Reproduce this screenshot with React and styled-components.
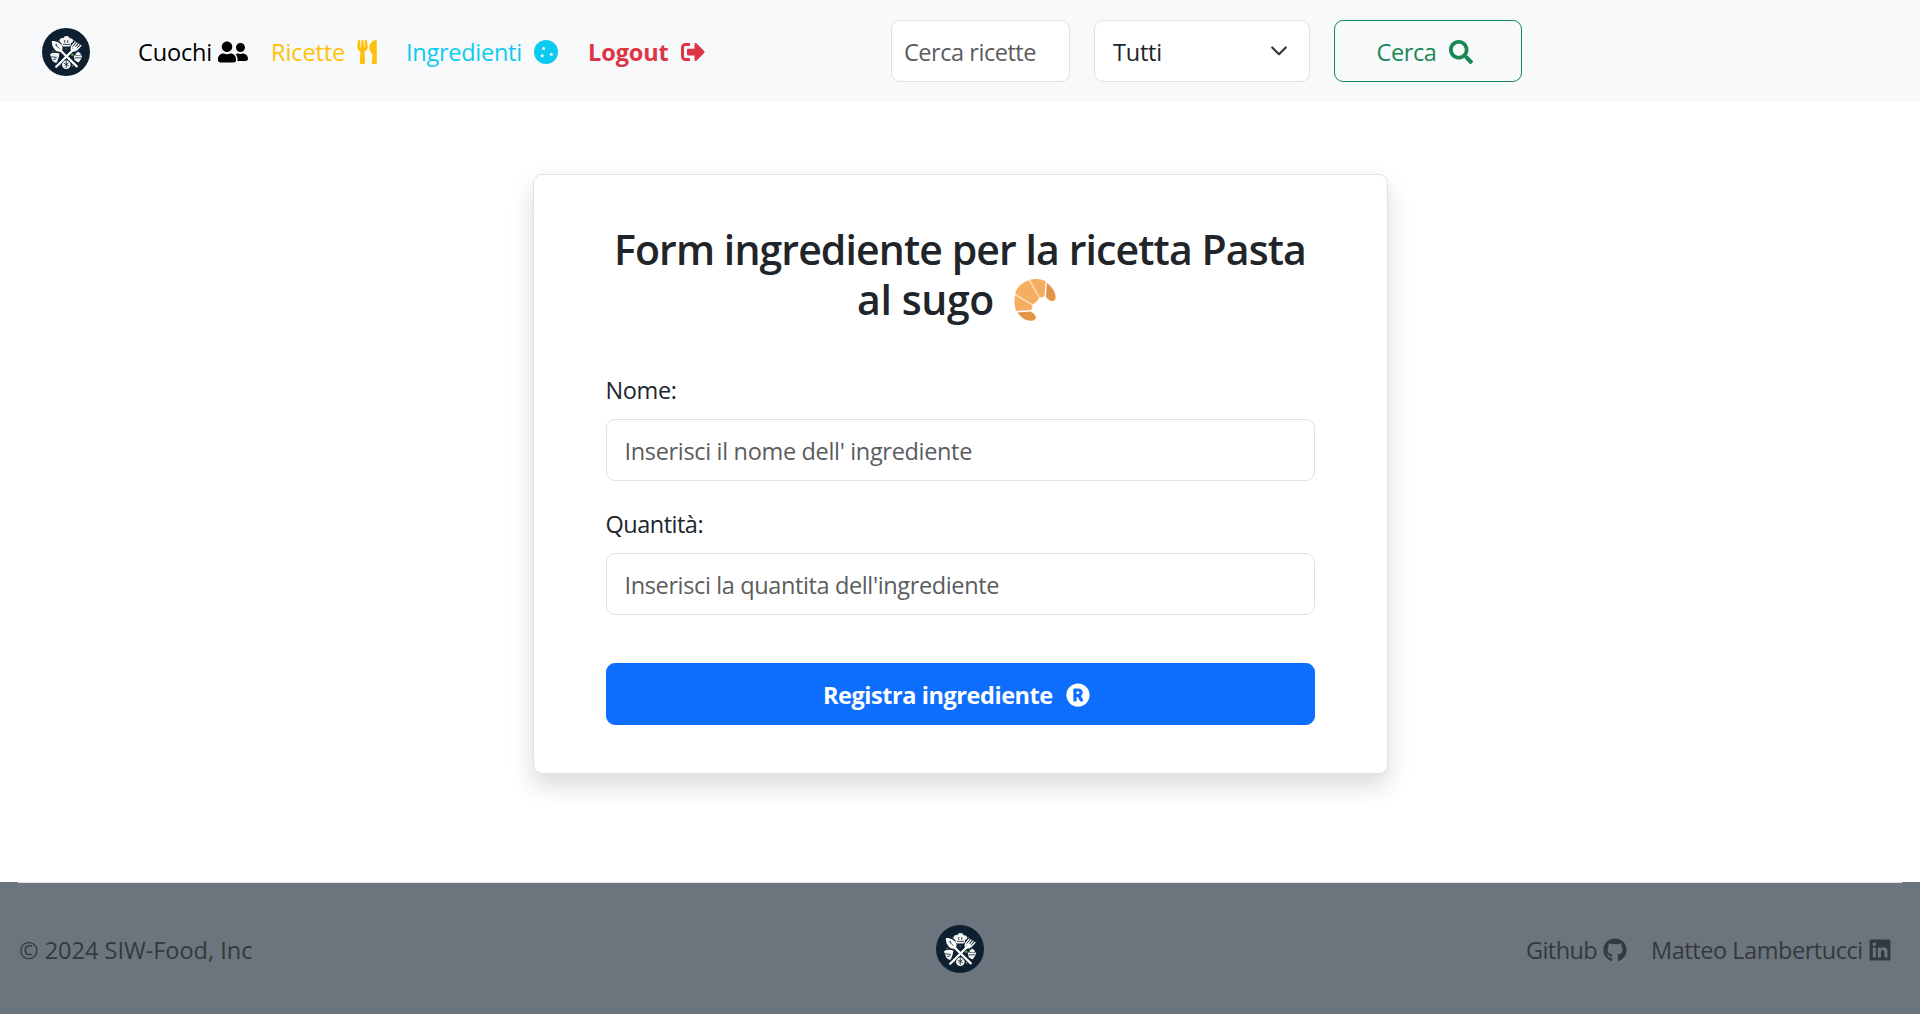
import React from "react";
import styled, { createGlobalStyle } from "styled-components";
import {
  FaUserFriends,
  FaUtensils,
  FaSignOutAlt,
  FaSearch,
  FaRegistered,
  FaGithub,
  FaLinkedin,
} from "react-icons/fa";

const GlobalStyle = createGlobalStyle`
  *, *::before, *::after { box-sizing: border-box; }
  body {
    margin: 0;
    background: #fff;
    color: #212529;
    font-family: "Open Sans", "Noto Sans", sans-serif;
    font-size: 23.5px;
    line-height: 36px;
  }
`;

const Page = styled.div`
  display: flex;
  flex-direction: column;
  height: 1014px;
  overflow: hidden;
`;

const Navbar = styled.header`
  display: flex;
  align-items: center;
  height: 102px;
  padding: 0 398px 0 42px;
  background: #f8f9fa;
`;

const Brand = styled.a`
  display: flex;
  margin-right: 48px;
  padding-top: 2px;
`;

const NavLinks = styled.nav`
  display: flex;
  align-items: center;
`;

const NavLink = styled.a`
  display: flex;
  align-items: center;
  width: ${(p) => p.$width}px;
  padding-top: 2px;
  color: ${(p) => p.$color};
  font-weight: ${(p) => (p.$bold ? 700 : 400)};
`;

const FriendsIcon = styled(FaUserFriends)`
  width: 30px;
  height: 24px;
`;

const Label = styled.span`
  flex: none;
  width: ${(p) => p.$width}px;
  letter-spacing: ${(p) => p.$tracking || 0}px;
  text-align: left;
  white-space: nowrap;
`;

const SearchForm = styled.form`
  display: flex;
  gap: 24px;
  margin-left: auto;
`;

const Field = styled.input`
  display: block;
  width: ${(p) => p.$width || "100%"};
  height: 62px;
  padding: 2px ${(p) => p.$inset}px 0;
  border: 1px solid #dee2e6;
  border-radius: 9px;
  outline: none;
  background: #fff;
  color: #212529;
  font: inherit;
  letter-spacing: ${(p) => p.$tracking}px;
  &::placeholder {
    color: #595c5f;
    opacity: 1;
  }
`;

const Select = styled.div`
  display: flex;
  align-items: center;
  justify-content: space-between;
  width: 216px;
  height: 62px;
  padding: 2px 21px 0 18px;
  border: 1px solid #dee2e6;
  border-radius: 9px;
  background: #fff;
`;

const Button = styled.button`
  display: flex;
  align-items: center;
  justify-content: center;
  width: ${(p) => p.$width};
  height: 62px;
  padding: 2px 7px 0 0;
  border: 1px solid ${(p) => p.$border};
  border-radius: 9px;
  background: ${(p) => p.$fill};
  color: ${(p) => p.$color};
  font: inherit;
  font-weight: ${(p) => (p.$bold ? 700 : 400)};
`;

const Main = styled.main`
  flex: 1;
  display: flex;
  justify-content: center;
  align-items: flex-start;
  padding-top: 72px;
`;

const Card = styled.section`
  width: 855px;
  height: 600px;
  padding: 48px 72px;
  border: 1px solid #dee2e6;
  border-radius: 9px;
  background: #fff;
  box-shadow: 0 12px 24px rgba(0, 0, 0, 0.15);
`;

const Title = styled.h2`
  margin: 0 0 48px;
  height: 101px;
  padding-top: 1px;
  font-size: 41px;
  font-weight: 550;
  line-height: 50px;
  text-align: center;
  white-space: nowrap;
`;

const TitleLine = styled.span`
  display: flex;
  align-items: center;
  justify-content: center;
  gap: 20px;
  padding-right: ${(p) => p.$trail || 0}px;
  letter-spacing: ${(p) => p.$tracking}px;
`;

const TitleIcon = styled.svg`
  width: 42px;
  height: 42px;
  margin-top: 2px;
`;

const FormGroup = styled.div`
  margin-bottom: ${(p) => p.$gap}px;
`;

const FormLabel = styled.label`
  display: block;
  margin-bottom: 11px;
  letter-spacing: ${(p) => p.$tracking}px;
`;

const Footer = styled.footer`
  height: 132px;
  padding: 0 18px;
  background: #6c757d;
  color: #34393e;
`;

const FooterBar = styled.div`
  display: grid;
  grid-template-columns: 1fr auto 1fr;
  align-items: center;
  height: 132px;
  padding-top: 1px;
  border-top: 1px solid #dee2e6;
`;

const Copyright = styled.span`
  padding: 2px 0 0 1px;
`;

const Social = styled.div`
  display: flex;
  justify-content: flex-end;
  gap: 24px;
  padding: 2px 10px 0 0;
`;

const SocialLink = styled.a`
  display: flex;
  align-items: center;
`;

function Logo() {
  return (
    <svg width="48" height="48" viewBox="0 0 48 48">
      <circle cx="24" cy="24" r="24" fill="#0e2030" />
      <g fill="#f4f6f6">
        <path d="M19.8 18 19.3 14.9C17 14 16.8 11 19.2 10.2 20.1 9.9 21 10.1 21.4 10.4 21.7 7.2 27.3 7.2 27.6 10.4 28.6 9.8 31.1 10.4 31.1 12.8 31.1 14.1 30.2 14.8 29 15L28.6 18Q24.3 19 19.8 18Z" />
        <path d="M8 26.3Q11.5 23.8 17.5 25.6L16.5 30 14.8 34.4Q12.2 35.5 10.3 32.6Z" />
        <path d="M31.7 27.6H40.2Q39.5 32 36.6 34.5L32.8 32.5Z" />
        <path d="M33.6 25.8 36.2 23.4 38.8 25.8V27H33.6Z" />
        <circle cx="24.3" cy="36.7" r="4.3" />
      </g>
      <g fill="none" stroke="#0e2030" strokeWidth=".8">
        <path d="m9.3 28.8 5.5.6M11.2 31.7l3-1M33 29.8h6M24.3 33v7M21.8 35.2l5 2.5M26.6 34.8l-4 2.7M21 16.4h7M22.8 12v3M25.8 12v3" />
      </g>
      <path d="m18.5 22.5 16.3 15.8M30 22 13.8 38.7" stroke="#0e2030" strokeWidth="4" />
      <path d="m18 22 16.8 16.3" stroke="#fff" strokeWidth="2.3" strokeLinecap="round" />
      <path d="M31.5 21.5 14.2 38.7" stroke="#fff" strokeWidth="2.3" strokeLinecap="round" />
      <path d="M9.8 13C14.7 12.7 19.4 15.4 20.6 19.5L20 23.9 15.6 23.6C11.8 22 9.8 18 9.8 13Z" fill="#fff" />
      <path d="m12.9 16.2 4.6 4.6M14.4 15.8l.5 2.5" stroke="#34434d" strokeWidth=".9" fill="none" />
      <path d="m33 14.1-3.5 4.5q-1.1 3.3 1.3 4.2 2.2.8 4.4-1.3l3.7-4M35 14.9l-3.4 4.5M37 16.2l-3.7 4.5" fill="none" stroke="#fff" strokeWidth="1.3" strokeLinecap="round" />
      <path d="m30 19.2 1 3.4 3.2-.8 1.2-1.8-3-2.3Z" fill="#fff" />
      <circle cx="30.3" cy="26.8" r="1.3" fill="#4fa63c" />
      <g fill="#aeb8bd">
        <circle cx="17" cy="13" r=".6" />
        <circle cx="11" cy="23.2" r=".6" />
        <circle cx="24.2" cy="21" r=".6" />
        <circle cx="32" cy="12.6" r=".6" />
        <circle cx="18.2" cy="36.8" r=".6" />
        <circle cx="30.4" cy="37.7" r=".6" />
      </g>
    </svg>
  );
}

function CookieIcon() {
  return (
    <svg width="24" height="24" viewBox="0 0 24 24">
      <circle cx="12" cy="12" r="12" fill="currentColor" />
      <g fill="#f8f9fa">
        <circle cx="9.6" cy="8.5" r="1.5" />
        <circle cx="17.3" cy="14.2" r="1.5" />
        <circle cx="8.2" cy="15.7" r="1.5" />
      </g>
    </svg>
  );
}

function CroissantIcon() {
  return (
    <TitleIcon viewBox="0 0 126 127">
      <path
        d="M4 46 44 4 94 5 91 53 75 58 55 80 52 94 5 97Z"
        fill="#fbe3bd"
      />
      <g fill="#f4ad61">
        <path d="M3 50 54 79Q56 86 51 94L5 96Q-2 71 3 50Z" />
        <path d="M3 44Q10 17 43 4L74 55Q75 67 56 76Z" />
        <path d="M48 2Q74-3 95 7L92 51Q85 56 77 54Z" />
      </g>
      <g fill="#e19547">
        <path d="M99 11Q128 34 125 60 121 70 108 65 101 62 96 54Z" />
        <path d="M10 101 50 98Q68 108 65 119 63 127 50 126 27 126 10 101Z" />
      </g>
    </TitleIcon>
  );
}

function Chevron() {
  return (
    <svg width="18" height="18" viewBox="0 0 16 16">
      <path
        d="m2 4 6 6 6-6"
        fill="none"
        stroke="#343a40"
        strokeWidth="2"
        strokeLinecap="round"
        strokeLinejoin="round"
      />
    </svg>
  );
}

export default function App() {
  return (
    <Page>
      <GlobalStyle />
      <Navbar>
        <Brand>
          <Logo />
        </Brand>
        <NavLinks>
          <NavLink $color="#000" $width={133}>
            <Label $width={80} $tracking={-0.15}>Cuochi</Label>
            <FriendsIcon />
          </NavLink>
          <NavLink $color="#ffc107" $width={135}>
            <Label $width={84} $tracking={-0.1}>Ricette</Label>
            <FaUtensils size={24} />
          </NavLink>
          <NavLink $color="#0dcaf0" $width={182}>
            <Label $width={128} $tracking={-0.27}>Ingredienti</Label>
            <CookieIcon />
          </NavLink>
          <NavLink $color="#dc3545" $width={120} $bold>
            <Label $width={93} $tracking={-0.1}>Logout</Label>
            <FaSignOutAlt size={24} />
          </NavLink>
        </NavLinks>
        <SearchForm>
          <Field $width="179px" $inset={12} $tracking={-0.46} placeholder="Cerca ricette" />
          <Select>
            <Label $tracking={-0.24}>Tutti</Label>
            <Chevron />
          </Select>
          <Button type="button" $width="188px" $border="#198754" $fill="transparent" $color="#198754">
            <Label $width={72} $tracking={-0.4}>Cerca</Label>
            <FaSearch size={24} />
          </Button>
        </SearchForm>
      </Navbar>

      <Main>
        <Card>
          <Title>
            <TitleLine $tracking={-0.9}>Form ingrediente per la ricetta Pasta</TitleLine>
            <TitleLine $tracking={-0.38} $trail={7}>
              al sugo
              <CroissantIcon />
            </TitleLine>
          </Title>
          <FormGroup $gap={25}>
            <FormLabel $tracking={-0.4}>Nome:</FormLabel>
            <Field $inset={18} $tracking={-0.33} placeholder="Inserisci il nome dell' ingrediente" />
          </FormGroup>
          <FormGroup $gap={48}>
            <FormLabel $tracking={-0.5}>Quantità:</FormLabel>
            <Field $inset={18} $tracking={-0.37} placeholder="Inserisci la quantita dell'ingrediente" />
          </FormGroup>
          <Button type="button" $width="100%" $border="#0d6efd" $fill="#0d6efd" $color="#fff" $bold>
            <Label $width={243} $tracking={-0.44}>Registra ingrediente</Label>
            <FaRegistered size={24} />
          </Button>
        </Card>
      </Main>

      <Footer>
        <FooterBar>
          <Copyright>© 2024 SIW-Food, Inc</Copyright>
          <Logo />
          <Social>
            <SocialLink>
              <Label $width={77} $tracking={-0.58}>Github</Label>
              <FaGithub size={24} />
            </SocialLink>
            <SocialLink>
              <Label $width={217} $tracking={-0.45}>Matteo Lambertucci</Label>
              <FaLinkedin size={24} />
            </SocialLink>
          </Social>
        </FooterBar>
      </Footer>
    </Page>
  );
}
